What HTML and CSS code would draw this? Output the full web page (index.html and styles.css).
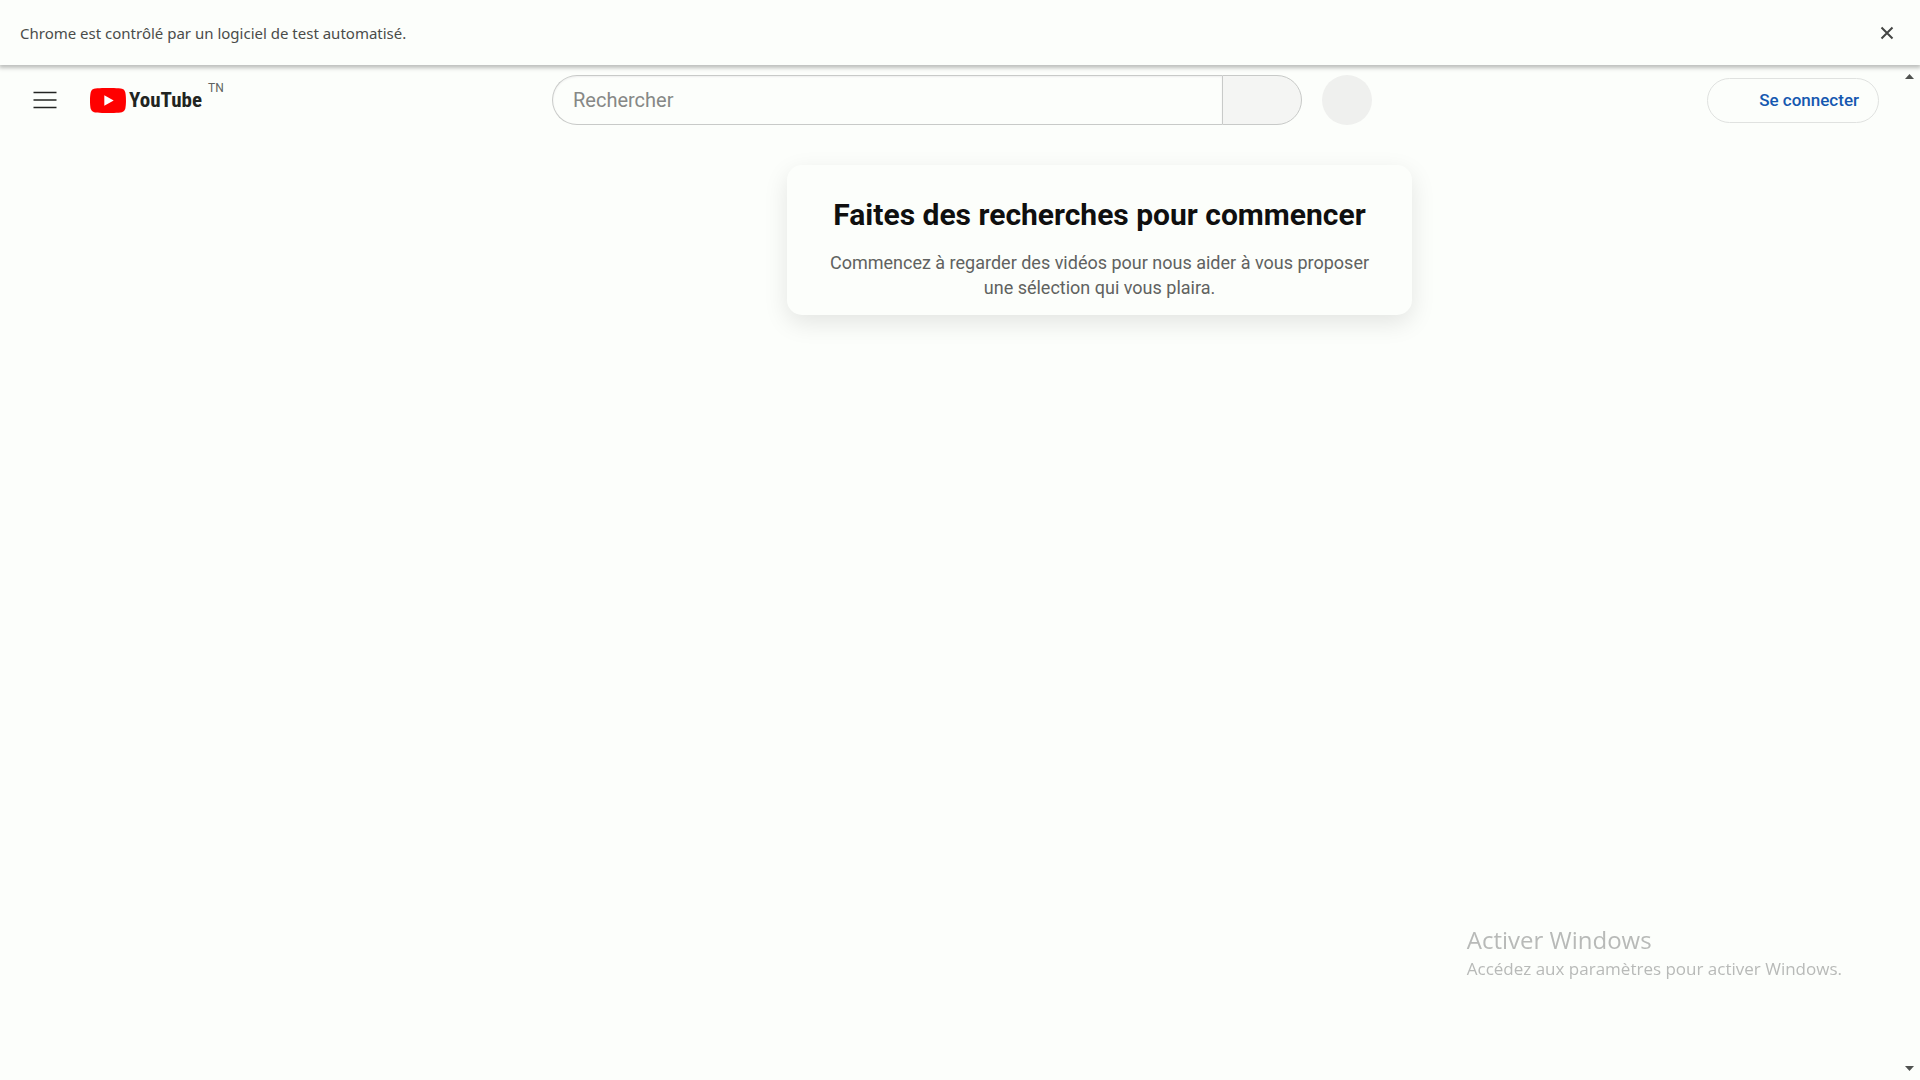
FILE: index.html
```html
<!DOCTYPE html>
<html lang="fr">
<head>
<meta charset="utf-8">
<meta name="viewport" content="width=device-width, initial-scale=1">
<title>YouTube</title>
<link rel="stylesheet" href="styles.css">
</head>
<body>
<div class="infobar" role="status">
  <span>Chrome est contrôlé par un logiciel de test automatisé.</span>
  <button class="infobar-close" type="button" aria-label="Fermer">
    <svg width="14" height="14" viewBox="0 0 14 14"><path d="M1.500 1.500L12.500 12.500M12.500 1.500L1.500 12.500" stroke="#444644" stroke-width="2" fill="none"/></svg>
  </button>
</div>
<div class="viewport">
  <div class="page">
    <header class="masthead">
      <div class="start">
        <button class="menu" type="button" aria-label="Menu">
          <svg width="24" height="18" viewBox="0 0 24 18"><path d="M0.500 1.500H23.500M0.500 9H23.500M0.500 16.500H23.500" stroke="#222422" stroke-width="1.300" fill="none"/></svg>
        </button>
        <a class="logo" href="#">
          <svg width="36" height="25" viewBox="0 0 36 25"><path d="M35.200 3.900A4.500 4.500 0 0 0 32 0.800C29.200 0 18 0 18 0S6.800 0 4 0.800A4.500 4.500 0 0 0 0.800 3.900C0 6.700 0 12.500 0 12.500S0 18.300 0.800 21.100A4.500 4.500 0 0 0 4 24.200C6.800 25 18 25 18 25S29.200 25 32 24.200A4.500 4.500 0 0 0 35.200 21.100C36 18.300 36 12.500 36 12.500S36 6.700 35.200 3.900Z" fill="#f00"/><path d="M14.300 7.200V17.800L23.700 12.500Z" fill="#fff"/></svg>
          <span class="wordmark">YouTube</span>
          <span class="country">TN</span>
        </a>
      </div>
      <div class="center">
        <form class="search">
          <input class="query" type="text" placeholder="Rechercher" aria-label="Rechercher">
          <button class="submit" type="button" aria-label="Lancer la recherche"></button>
        </form>
        <button class="mic" type="button" aria-label="Recherche vocale"></button>
      </div>
      <div class="end">
        <a class="signin" href="#">Se connecter</a>
      </div>
    </header>
    <main class="content">
      <section class="card">
        <h1>Faites des recherches pour commencer</h1>
        <p>Commencez à regarder des vidéos pour nous aider à vous proposer une sélection qui vous plaira.</p>
      </section>
    </main>
  </div>
  <div class="scrollbar" aria-hidden="true">
    <svg width="9" height="5" viewBox="0 0 9 5"><path d="M0 5L4.500 0L9 5Z" fill="#505250"/></svg>
    <svg width="9" height="5" viewBox="0 0 9 5"><path d="M0 0L4.500 5L9 0Z" fill="#505250"/></svg>
  </div>
</div>
<aside class="watermark">
  <p class="watermark-title">Activer Windows</p>
  <p class="watermark-text">Accédez aux paramètres pour activer Windows.</p>
</aside>
</body>
</html>
```
FILE: styles.css
```css
* {
  box-sizing: border-box;
}

body {
  margin: 0;
  min-height: 100vh;
  display: flex;
  flex-direction: column;
  background: #fcfefb;
  color: #0f0f0f;
  font-family: Roboto, "Liberation Sans", sans-serif;
}

button {
  padding: 0;
  border: 0;
  background: none;
  font: inherit;
}

svg {
  display: block;
}

.infobar {
  display: flex;
  align-items: center;
  justify-content: space-between;
  height: 65px;
  padding: 0 24px 0 20px;
  box-shadow: 0 2px 4px 1px rgba(0, 0, 0, 0.25);
  color: #4a4c4a;
  font: 15px/24px "Noto Sans", "Open Sans", sans-serif;
}

.infobar-close {
  padding: 2px;
}

.viewport {
  flex: 1;
  display: flex;
}

.page {
  flex: 1;
  min-width: 0;
}

.masthead {
  display: flex;
  align-items: center;
  justify-content: space-between;
  gap: 20px;
  height: 70px;
  padding: 0 20px;
}

.start {
  display: flex;
  align-items: center;
  flex: none;
  width: 205px;
}

.menu {
  display: flex;
  align-items: center;
  justify-content: center;
  width: 50px;
  height: 50px;
  margin-right: 20px;
}

.logo {
  display: flex;
  align-items: center;
  color: #212421;
  text-decoration: none;
}

.wordmark {
  width: 78px;
  padding-left: 3px;
  font: bold 21px/25px "Liberation Sans Narrow", "Roboto Condensed", "Liberation Sans", sans-serif;
}

.country {
  align-self: flex-start;
  margin-left: 4px;
  margin-top: -6px;
  color: #606260;
  font-size: 12px;
  line-height: 12px;
}

.center {
  display: flex;
  gap: 20px;
  flex: 0 1 820px;
  min-width: 0;
}

.search {
  display: flex;
  flex: 1;
  min-width: 0;
  height: 50px;
}

.query {
  flex: 1;
  min-width: 0;
  padding: 0 20px;
  border: 1px solid #c8cac8;
  border-right: 0;
  border-radius: 25px 0 0 25px;
  background: transparent;
  box-shadow: inset 0 1px 2px #eeeeee;
  font: 20px/30px Roboto, sans-serif;
}

.query::placeholder {
  color: #868886;
}

.submit {
  width: 80px;
  border: 1px solid #c8cac8;
  border-radius: 0 25px 25px 0;
  background: #f4f5f3;
}

.mic {
  flex: none;
  width: 50px;
  height: 50px;
  border-radius: 50%;
  background: #eff0ee;
}

.end {
  display: flex;
  justify-content: flex-end;
  flex: none;
  width: 180px;
}

.signin {
  padding: 0 19px 0 51px;
  border: 1px solid #e0e2e0;
  border-radius: 23px;
  color: #1558b0;
  font-size: 17px;
  font-weight: 500;
  line-height: 43px;
  text-decoration: none;
}

.content {
  display: flex;
  justify-content: center;
  padding: 30px 0 0 300px;
}

.card {
  width: 625px;
  padding: 30px 40px 15px;
  border-radius: 15px;
  box-shadow: 0 8px 25px rgba(0, 0, 0, 0.1);
  text-align: center;
}

.card h1 {
  margin: 0 0 15px;
  font-size: 30px;
  font-weight: 700;
  line-height: 40px;
}

.card p {
  margin: 0;
  color: #606260;
  font-size: 18px;
  line-height: 25px;
}

.scrollbar {
  display: flex;
  flex-direction: column;
  align-items: center;
  justify-content: space-between;
  width: 21px;
  padding: 9px 0;
}

.watermark {
  position: fixed;
  right: 78px;
  bottom: 99px;
  color: #b8bab8;
  font-family: "Open Sans", "Noto Sans", sans-serif;
}

.watermark p {
  margin: 0;
}

.watermark-title {
  font-size: 24px;
  line-height: 34px;
}

.watermark-text {
  font-size: 17px;
  line-height: 24px;
}
```
